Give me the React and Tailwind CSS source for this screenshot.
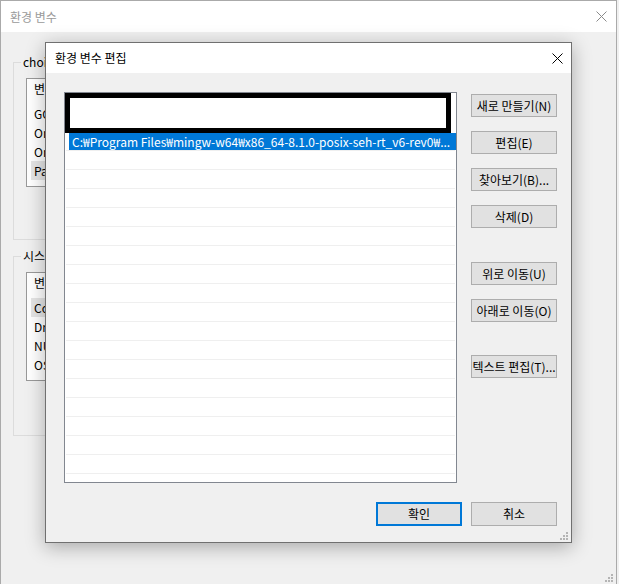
import React from 'react';

const font = "font-['Noto_Sans_CJK_KR','Noto_Sans',sans-serif]";

// size grip: 6 little squares in a stair pattern
const Grip = ({ className }) => (
  <svg className={className} width="9" height="9" viewBox="0 0 9 9">
    <rect x="6" y="0" width="2" height="2" fill="#b4b4b4" />
    <rect x="3" y="3" width="2" height="2" fill="#b4b4b4" />
    <rect x="6" y="3" width="2" height="2" fill="#b4b4b4" />
    <rect x="0" y="6" width="2" height="2" fill="#b4b4b4" />
    <rect x="3" y="6" width="2" height="2" fill="#b4b4b4" />
    <rect x="6" y="6" width="2" height="2" fill="#b4b4b4" />
  </svg>
);

const CloseX = ({ color }) => (
  <svg width="11" height="11" viewBox="0 0 11 11">
    <path d="M0.5 0.5 L10.5 10.5 M10.5 0.5 L0.5 10.5" stroke={color} strokeWidth="1" />
  </svg>
);

// group box of the window behind; its right part is hidden under the dialog
const GroupBox = ({ label, items, highlight, className }) => (
  <div className={`relative w-[50px] border border-[#dcdcdc] ${className}`}>
    <span className="absolute -top-[9px] left-[7px] bg-[#f0f0f0] px-[2px] leading-[16px] w-[26px] overflow-hidden whitespace-nowrap text-black">
      {label}
    </span>
    <div className="ml-[12px] mt-[15px] w-[36px] h-[109px] bg-white border border-[#999999] overflow-hidden">
      <div className="h-[22px] pl-[7px] leading-[20px] whitespace-nowrap">변수</div>
      <div className="mt-[3px]">
        {items.map((it, i) => (
          <div
            key={it}
            className={`h-[19px] ml-[4px] pl-[3px] leading-[19px] whitespace-nowrap overflow-hidden ${i === highlight ? 'bg-[#e5e5e5]' : ''}`}
          >
            {it}
          </div>
        ))}
      </div>
    </div>
  </div>
);

const Btn = ({ children, primary = false, className = '' }) => (
  <button
    className={`w-[86px] flex items-center justify-center whitespace-nowrap bg-[#e1e1e1] text-[12px] text-black ${
      primary ? 'border-2 border-[#0078d7]' : 'border border-[#adadad]'
    } ${className}`}
  >
    {children}
  </button>
);

export default function App() {
  const rows = Array.from({ length: 18 });

  return (
    <div className={`relative w-[619px] h-[584px] bg-[#f0f0f0] overflow-hidden text-[12px] text-black ${font}`}>
      {/* background window: 환경 변수 */}
      <div className="relative w-[617px] h-[584px] border-l border-t border-r border-[#aaaaaa] flex flex-col">
        <div className="h-[31px] bg-white flex items-center justify-between pl-[9px] pr-[9px]">
          <span className="text-[#9a9a9a]">환경 변수</span>
          <CloseX color="#8a8a8a" />
        </div>
        <div className="flex-1 pl-[12px]">
          <GroupBox
            label="choi"
            items={['GOPATH', 'OneDrive', 'OneDriveConsumer', 'Path']}
            highlight={3}
            className="mt-[30px] h-[178px]"
          />
          <GroupBox
            label="시스템 변수"
            items={['ComSpec', 'DriverData', 'NUMBER_OF_PROCESSORS', 'OS']}
            highlight={0}
            className="mt-[16px] h-[180px]"
          />
        </div>
        <Grip className="absolute right-[2px] bottom-[1px]" />
      </div>

      {/* dialog: 환경 변수 편집 */}
      <div className="absolute left-[45px] top-[42px] w-[527px] h-[501px] border border-[#707070] bg-[#f0f0f0] flex flex-col shadow-[0_4px_18px_rgba(0,0,0,0.3)]">
        <div className="h-[30px] bg-white flex items-center justify-between pl-[9px] pr-[8px]">
          <span>환경 변수 편집</span>
          <CloseX color="#000000" />
        </div>

        <div className="relative flex-1 flex flex-col pl-[18px] pt-[19px] pr-[14px]">
          <div className="flex gap-[14px]">
            {/* path list */}
            <div className="w-[393px] h-[391px] bg-white border border-[#828790] overflow-hidden">
              <div className="w-[386px] h-[40px] border-[5px] border-black bg-white" />
              <div className="ml-[4px] h-[17px] bg-[#0078d7] text-white pl-[3px] leading-[17px] whitespace-nowrap overflow-hidden">
                C:₩Program Files₩mingw-w64₩x86_64-8.1.0-posix-seh-rt_v6-rev0₩...
              </div>
              {rows.map((_, i) => (
                <div key={i} className="mx-[1px] h-[19px] border-t border-[#efefef]" />
              ))}
            </div>

            <div className="flex flex-col pt-[2px]">
              <Btn className="h-[23px]">새로 만들기(N)</Btn>
              <Btn className="h-[23px] mt-[14px]">편집(E)</Btn>
              <Btn className="h-[23px] mt-[14px]">찾아보기(B)...</Btn>
              <Btn className="h-[23px] mt-[14px]">삭제(D)</Btn>
              <Btn className="h-[23px] mt-[34px]">위로 이동(U)</Btn>
              <Btn className="h-[23px] mt-[14px]">아래로 이동(O)</Btn>
              <Btn className="h-[23px] mt-[33px]">텍스트 편집(T)...</Btn>
            </div>
          </div>

          <div className="flex justify-end gap-[9px] mt-[19px]">
            <Btn primary className="h-[24px]">확인</Btn>
            <Btn className="h-[24px]">취소</Btn>
          </div>

          <Grip className="absolute right-[2px] bottom-[1px]" />
        </div>
      </div>
    </div>
  );
}
